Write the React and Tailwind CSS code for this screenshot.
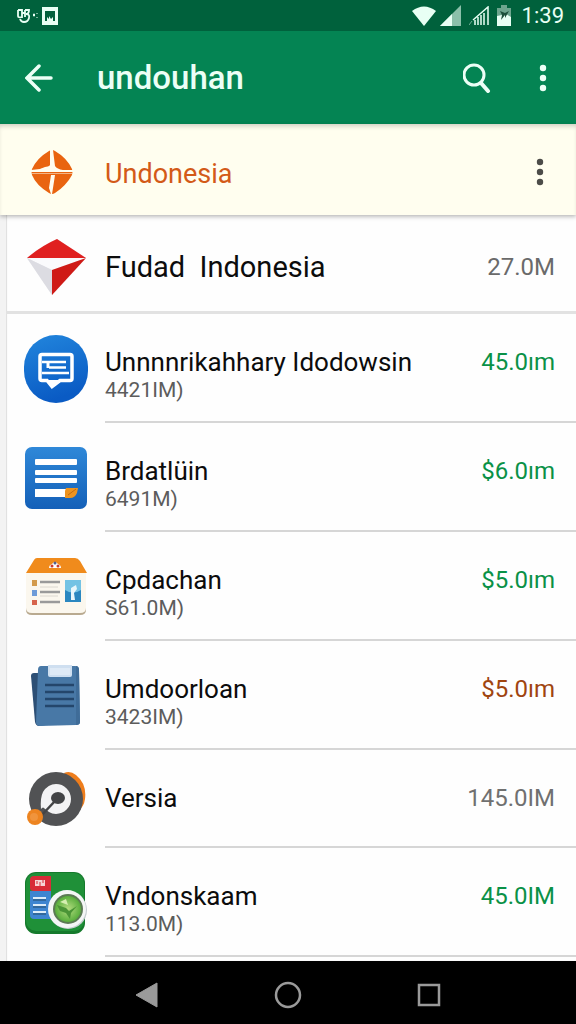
import React from 'react'

function Dots({ className }) {
  return (
    <svg viewBox="0 0 8 28" className={className} fill="currentColor">
      <circle cx="4" cy="4" r="3.200" />
      <circle cx="4" cy="14" r="3.200" />
      <circle cx="4" cy="24" r="3.200" />
    </svg>
  )
}

function CompassIcon() {
  return (
    <svg viewBox="0 0 44 46" className="h-[46px] w-[44px]">
      <path d="M19 2Q22 0 25 2Q37 9 42 20Q43 23 42 26Q36 37 25 44Q22 46 19 44Q6 36 2 26Q1 23 2 20Q7 9 19 2Z" fill="#e96410" />
      <path d="M20 1h3l2 16q2 3 8 4h10v2H1v-2l9-1q8-1 10-4z" fill="#fffdf0" />
      <path d="M21 26h4l-2 13-1 6h-1l-2-6z" fill="#fffdf0" />
      <path d="M10 20q8-4 13-2l3 2-3 1H11z" fill="#fffdf0" />
      <path d="M2 24.500h40" stroke="#f2b384" strokeWidth="1" />
    </svg>
  )
}

function KiteIcon() {
  return (
    <svg viewBox="0 0 60 58" className="h-[58px] w-[60px]">
      <path d="M31 1L60 20 26 57 1 20Q15 8 31 1Z" fill="#e9e9ee" />
      <path d="M31 1L60 20 1 20Q15 8 31 1Z" fill="#e02020" />
      <path d="M1 20l59 0-34 12z" fill="#fafafc" />
      <path d="M1 20l25 12v25z" fill="#dcdce2" />
      <path d="M60 20L26 32v25z" fill="#cf1a16" />
    </svg>
  )
}

function ChatIcon() {
  return (
    <svg viewBox="0 0 64 68" className="h-[68px] w-[64px]">
      <defs>
        <linearGradient id="chat" x1="0" y1="0" x2="0.300" y2="1">
          <stop offset="0" stopColor="#2286dd" />
          <stop offset="1" stopColor="#0a5bc4" />
        </linearGradient>
      </defs>
      <rect width="64" height="68" rx="32" fill="url(#chat)" />
      <path d="M18 19.500h28q2 0 2 2v22q0 2-2 2H36l-8 6-5-6h-5q-2 0-2-2v-22q0-2 2-2Z" fill="none" stroke="#fff" strokeWidth="3.500" />
      <path d="M18 27h24M25 32.500h17M18 38h27" stroke="#fff" strokeWidth="2.500" fill="none" />
      <path d="M24 27v6" stroke="#fff" strokeWidth="3" />
      <path d="M22 45h14l-8 7z" fill="#fff" />
    </svg>
  )
}

function NotesIcon() {
  return (
    <svg viewBox="0 0 62 62" className="h-[62px] w-[62px]">
      <defs>
        <linearGradient id="notes" x1="0" y1="0" x2="0" y2="1">
          <stop offset="0" stopColor="#2f88d8" />
          <stop offset="1" stopColor="#1460b8" />
        </linearGradient>
      </defs>
      <rect width="62" height="62" rx="7" fill="url(#notes)" />
      <rect x="10" y="12" width="42" height="6" rx="1" fill="#fff" />
      <rect x="10" y="23" width="42" height="5" rx="1" fill="#fff" />
      <rect x="10" y="31" width="42" height="5" rx="1" fill="#fff" />
      <path d="M10 42h32l-2 8H10z" fill="#fff" />
      <path d="M41 41h12l-1 5q-2 5-7 5h-5v-7z" fill="#ee9420" />
      <path d="M43 48l8-6" stroke="#c26b10" strokeWidth="1" />
    </svg>
  )
}

function BoardIcon() {
  return (
    <svg viewBox="0 0 62 58" className="h-[58px] w-[62px]">
      <path d="M1 14h60v38q0 5-6 5H7q-6 0-6-5z" fill="#b9aa90" />
      <path d="M1 14h60v36q0 5-6 5H7q-6 0-6-5z" fill="#fbf7ee" />
      <path d="M12 0h38q3 0 5 3l7 12H1L9 2q1-2 3-2z" fill="#f08b1c" />
      <path d="M24 10q0-3 3-4 3-4 6 0 3 1 3 4z" fill="#fff" />
      <circle cx="27" cy="8" r="1.500" fill="#c83b30" />
      <circle cx="33" cy="8" r="1.500" fill="#c83b30" />
      <circle cx="30" cy="5" r="1.500" fill="#55628e" />
      <rect x="7" y="22" width="5" height="6" fill="#d39a4b" />
      <rect x="7" y="32" width="5" height="6" fill="#6e9bd8" />
      <rect x="7" y="42" width="5" height="5" fill="#d6634b" />
      <path d="M15 24h20M15 34h20M15 44h20" stroke="#9a9a9a" strokeWidth="2.500" />
      <path d="M15 29h18M15 38h18" stroke="#dcd8d0" strokeWidth="1" />
      <rect x="40" y="22" width="16" height="22" fill="#2a87c0" />
      <path d="M40 22h16v10q-8 5-16 0z" fill="#74c3e4" />
      <path d="M46 30l5-3 1 4-3 4 1 7h-4z" fill="#e9f7fb" />
    </svg>
  )
}

function ClipboardIcon() {
  return (
    <svg viewBox="0 0 52 62" className="h-[62px] w-[52px]">
      <path d="M1 11q0-3 3-3h8l4 52-7 1q-3 0-4-4z" fill="#2d4f75" />
      <path d="M11 1h34q4 0 4 4l1 52q0 3-4 3l-36 1q-4 0-4-4L8 5q0-4 3-4z" fill="#4878a6" />
      <path d="M46 1q3 0 3 4l1 52q0 3-4 3z" fill="#3f6c98" />
      <path d="M18 0h24v10q0 2-2 2H20q-2 0-2-2z" fill="#cfdff0" />
      <path d="M20 3h20v7H20z" fill="#dfeaf6" />
      <path d="M15 20h29M15 27h29M15 34h29M15 41h29" stroke="#24466b" strokeWidth="2.500" />
    </svg>
  )
}

function DiscIcon() {
  return (
    <svg viewBox="0 0 60 56" className="h-[56px] w-[60px]">
      <path d="M38 2q6-3 12 2 11 9 9 24-1 8-7 12z" fill="#ee7d1c" />
      <circle cx="30" cy="28" r="27" fill="#515254" />
      <path d="M30 13a15 15 0 1 1 0 30q-4 0-7-2l-4-3q-2-3-4 0-1-11 2-17 5-8 13-8z" fill="#f3f3f4" />
      <ellipse cx="32" cy="27" rx="7" ry="6" fill="#434446" />
      <path d="M29 30L14 46" stroke="#434446" strokeWidth="2.500" />
      <circle cx="9" cy="46" r="8" fill="#ed8420" />
      <circle cx="8" cy="46" r="4" fill="#f0943c" />
    </svg>
  )
}

function LensIcon() {
  return (
    <svg viewBox="0 0 62 62" className="h-[62px] w-[62px]">
      <defs>
        <radialGradient id="lens">
          <stop offset="0" stopColor="#b4dc80" />
          <stop offset="1" stopColor="#58ad3c" />
        </radialGradient>
      </defs>
      <rect width="60" height="62" rx="11" fill="#157a2c" />
      <rect y="1" x="1" width="58" height="58" rx="10" fill="#1f9038" />
      <path d="M5 19h21v28H9q-4 0-4-4z" fill="#3e85d0" />
      <path d="M5 8q0-4 4-4h17v15H9q-4 0-4-3z" fill="#d82c38" />
      <path d="M10 8h10v6H10z" fill="#f6d4d6" />
      <path d="M12 9v3M15 10v4M18 8v3" stroke="#d82c38" strokeWidth="1" />
      <path d="M8 26h13M8 33h13M8 40h13" stroke="#dcecf8" strokeWidth="2" />
      <path d="M8 28h13M8 35h13M8 42h13" stroke="#244c6a" strokeWidth="1" />
      <circle cx="43" cy="38" r="19" fill="#c5cdd0" />
      <circle cx="42" cy="37" r="19" fill="#f4f6f6" />
      <circle cx="43" cy="37" r="15" fill="#5b7a54" />
      <circle cx="43" cy="37" r="13" fill="url(#lens)" />
      <path d="M32 33l9 3 3 3 8-5-6 7-1 6-4-6-6-2z" fill="#4a9436" />
      <path d="M35 30l6-3 2 6z" fill="#d5efb0" />
    </svg>
  )
}

const items = [
  { name: 'Unnnnrikahhary Idodowsin', sub: '4421IM)', amount: '45.0ım', color: 'text-[#0a9147]', Icon: ChatIcon },
  { name: 'Brdatlüin', sub: '6491M)', amount: '$6.0ım', color: 'text-[#0a9147]', Icon: NotesIcon },
  { name: 'Cpdachan', sub: 'S61.0M)', amount: '$5.0ım', color: 'text-[#0a9147]', Icon: BoardIcon },
  { name: 'Umdoorloan', sub: '3423IM)', amount: '$5.0ım', color: 'text-[#a04510]', Icon: ClipboardIcon },
  { name: 'Versia', amount: '145.0IM', color: 'text-[#707070]', Icon: DiscIcon },
  { name: 'Vndonskaam', sub: '113.0M)', amount: '45.0IM', color: 'text-[#0a9147]', Icon: LensIcon },
]

function Row({ item }) {
  const { name, sub, amount, color, Icon } = item
  return (
    <li className="flex">
      <div className="flex w-[99px] shrink-0 items-center justify-center">
        <Icon />
      </div>
      <div className={`flex min-w-0 grow justify-between border-b-2 border-[#d6d6d6] pt-8 pr-[21px] ${sub ? 'h-[109px]' : 'h-[98px]'}`}>
        <div>
          <p className="text-[26px] leading-8 text-[#0c0c0c]">{name}</p>
          {sub && <p className="text-[21px] leading-6 text-[#5c5c5c]">{sub}</p>}
        </div>
        <p className={`text-2xl leading-8 ${color}`}>{amount}</p>
      </div>
    </li>
  )
}

function StatusBar() {
  return (
    <div className="flex h-[31px] items-center justify-between bg-[#00613c] pr-3 pl-4 text-[#e8fff4]">
      <div className="flex items-center gap-1">
        <svg viewBox="0 0 22 16" className="h-4 w-[22px]" fill="none" stroke="currentColor" strokeWidth="1.800">
          <path d="M2 2v6q0 2 4 1M2 2h4v8M9 2v7M6 5h3M9 2h4q0 4-3 4 4 0 3 4-1 4-5 4-3 0-4-3" />
          <path d="M17 7h2" strokeWidth="2.500" />
          <path d="M21 5v1M21 9v1" strokeWidth="1" />
        </svg>
        <svg viewBox="0 0 16 18" className="h-[18px] w-4">
          <path d="M0 0h16v18H0zM3 4v10h10V4z" fill="currentColor" fillRule="evenodd" />
          <path d="M5 14v-4l2 2V9l2 3 2-2v4z" fill="currentColor" />
        </svg>
      </div>
      <div className="flex items-center">
        <svg viewBox="0 0 24 20" className="h-5 w-6" fill="currentColor">
          <path d="M0 5Q12-4 24 5L12 20z" />
        </svg>
        <svg viewBox="0 0 21 21" className="ml-1 h-[21px] w-[21px]" fill="currentColor">
          <path d="M21 0v21H0z" opacity="0.600" />
          <path d="M12 9v12H0z" />
        </svg>
        <svg viewBox="0 0 20 20" className="ml-2 h-5 w-5" fill="none" stroke="currentColor" strokeWidth="1.500">
          <path d="M4 14L19 1v18M6 19v-5M9 19v-8M12 19V9M15 19V7" />
          <path d="M0 19l3-4" strokeWidth="1" opacity="0.500" />
        </svg>
        <svg viewBox="0 0 14 21" className="ml-2 h-[21px] w-[14px]">
          <path d="M4 0h6v3h4v9H0V3h4z" fill="#6da58e" />
          <path d="M0 11l5-1 4-1 5 3v9H0z" fill="currentColor" />
          <path d="M3 6l5 2 4-2-4 7v-3l-4 5 1-5z" fill="#1b4f3a" />
        </svg>
        <span className="ml-[11px] text-[22px] leading-6">1:39</span>
      </div>
    </div>
  )
}

export default function App() {
  return (
    <div className="flex min-h-screen flex-col bg-[#fefefe] font-['Roboto','Liberation_Sans',sans-serif]">
      <StatusBar />
      <header className="flex h-[93px] items-center bg-[#048453] pr-[29px] pl-[25px] text-[#ecfff6]">
        <button aria-label="Back">
          <svg viewBox="0 0 28 28" className="h-7 w-7" fill="none" stroke="currentColor" strokeWidth="3.500" strokeLinecap="round">
            <path d="M14 2L2 14l12 12M3 14h23" />
          </svg>
        </button>
        <h1 className="ml-11 grow text-[33px] leading-10 font-medium">undouhan</h1>
        <button aria-label="Search">
          <svg viewBox="0 0 28 30" className="h-[30px] w-7" fill="none" stroke="currentColor" strokeWidth="3">
            <circle cx="11" cy="12" r="10" />
            <path d="M18 20l7 8" strokeWidth="4" strokeLinecap="round" />
          </svg>
        </button>
        <button aria-label="More" className="ml-12">
          <Dots className="h-7 w-2" />
        </button>
      </header>
      <section className="relative flex h-[91px] items-center bg-[#fffeef] pt-1 pr-8 pl-[30px] shadow-[0_2px_4px_rgba(0,0,0,0.25),inset_0_4px_5px_-2px_rgba(0,0,0,0.2)]">
        <CompassIcon />
        <h2 className="ml-[31px] grow pt-1 text-[27px] leading-8 text-[#d35a18]">Undonesia</h2>
        <button aria-label="Options" className="text-[#4c4c48]">
          <Dots className="h-7 w-2" />
        </button>
      </section>
      <main className="grow border-l-6 border-[#f3f3f3] shadow-[inset_1px_0_1px_#dedede]">
        <div className="flex h-[99px] items-center border-b-3 border-[#e2e2e2] pt-2 pr-[21px]">
          <div className="flex w-[99px] shrink-0 justify-center">
            <KiteIcon />
          </div>
          <p className="grow text-[29px] leading-9 whitespace-pre text-[#0c0c0c]">Fudad  Indonesia</p>
          <p className="text-2xl leading-8 text-[#6a6a6a]">27.0M</p>
        </div>
        <ul>
          {items.map((item) => (
            <Row key={item.name} item={item} />
          ))}
        </ul>
      </main>
      <nav className="flex h-[63px] items-center justify-center gap-[115px] bg-black pt-1 text-[#9a9a9a]">
        <button aria-label="Back">
          <svg viewBox="0 0 24 26" className="h-[26px] w-6" fill="currentColor">
            <path d="M1 13L22 1v24z" stroke="currentColor" strokeLinejoin="round" />
          </svg>
        </button>
        <button aria-label="Home">
          <svg viewBox="0 0 28 28" className="h-7 w-7" fill="none" stroke="currentColor" strokeWidth="2.500">
            <circle cx="14" cy="14" r="12" />
          </svg>
        </button>
        <button aria-label="Recent apps">
          <svg viewBox="0 0 24 24" className="h-6 w-6" fill="none" stroke="currentColor" strokeWidth="2.500">
            <rect x="2" y="2" width="20" height="20" />
          </svg>
        </button>
      </nav>
    </div>
  )
}
